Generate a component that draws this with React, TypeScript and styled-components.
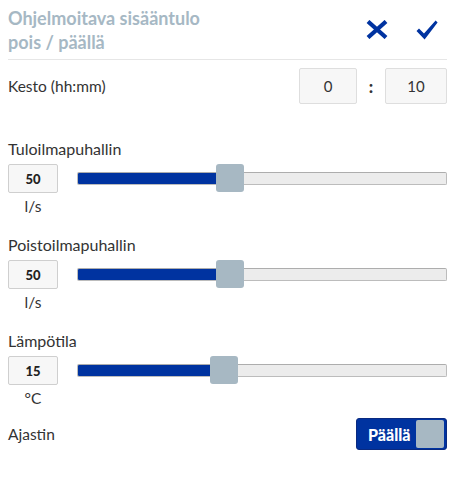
import React from "react";
import styled, { createGlobalStyle } from "styled-components";

const GlobalStyle = createGlobalStyle`
  body {
    margin: 0;
    background: #fff;
    font-family: Lato, "Liberation Sans", sans-serif;
    color: #333;
  }
`;

const Panel = styled.div`
  width: 439px;
  margin-left: 8px;
  display: flex;
  flex-direction: column;
`;

const Header = styled.div`
  display: flex;
  justify-content: space-between;
  align-items: flex-start;
  height: 60px;
  padding-top: 6px;
  box-sizing: border-box;
  border-bottom: 1px solid #e6e6e6;
`;

const Title = styled.h1`
  margin: 0;
  font-size: 18px;
  font-weight: 700;
  line-height: 24px;
  color: #a6b8c4;
`;

const Actions = styled.div`
  display: flex;
  gap: 28px;
  padding-top: 14px;
  padding-right: 9px;
`;

const IconButton = styled.button`
  border: 0;
  background: none;
  padding: 0;
  cursor: pointer;
  display: flex;
`;

const DurationRow = styled.div`
  display: flex;
  align-items: center;
  justify-content: space-between;
  margin-top: 8px;
`;

const Label = styled.div`
  font-size: 15.5px;
  line-height: 20px;
`;

const TimeInputs = styled.div`
  display: flex;
  align-items: center;
`;

const TimeBox = styled.div<{ $wide?: boolean }>`
  width: ${(p) => (p.$wide ? "62px" : "58px")};
  height: 36px;
  box-sizing: border-box;
  border: 1px solid #dedede;
  border-radius: 2px;
  background: #f7f7f7;
  display: flex;
  align-items: center;
  justify-content: center;
  font-size: 15px;
`;

const Colon = styled.span`
  width: 28px;
  text-align: center;
  font-weight: 900;
  font-size: 17px;
`;

const Section = styled.div<{ $first?: boolean }>`
  display: flex;
  flex-direction: column;
  margin-top: ${(p) => (p.$first ? "35px" : "19px")};
`;

const SectionLabel = styled(Label)`
  font-size: 16px;
`;

const ControlRow = styled.div`
  display: flex;
  align-items: center;
  gap: 19px;
  margin-top: 5px;
`;

const ValueBox = styled.div`
  width: 50px;
  height: 29px;
  box-sizing: border-box;
  border: 1px solid #cfcfcf;
  border-radius: 2px;
  background: #f7f7f7;
  display: flex;
  align-items: center;
  justify-content: center;
  font-size: 13px;
  font-weight: 900;
  color: #222;
  flex-shrink: 0;
`;

const Unit = styled.div`
  width: 50px;
  text-align: center;
  font-size: 15.5px;
  line-height: 20px;
  margin-top: 3px;
`;

const Slider = styled.div`
  position: relative;
  flex: 1;
  height: 28px;
  display: flex;
  align-items: center;
`;

const Track = styled.div`
  width: 100%;
  height: 13px;
  box-sizing: border-box;
  border: 1px solid #bcbcbc;
  border-top-color: #adadad;
  border-radius: 2px;
  background: #ececec;
  position: relative;
  overflow: hidden;
`;

const Fill = styled.div`
  position: absolute;
  left: -1px;
  top: -1px;
  bottom: -1px;
  background: #0033a0;
  border-radius: 3px 0 0 3px;
`;

const Thumb = styled.div`
  position: absolute;
  top: -1px;
  width: 28px;
  height: 28px;
  border-radius: 3px;
  background: #a7b8c3;
`;

const TimerRow = styled.div`
  display: flex;
  align-items: center;
  justify-content: space-between;
  margin-top: 10px;
`;

const Toggle = styled.button`
  width: 91px;
  height: 32px;
  box-sizing: border-box;
  border: 1px solid #0a2a80;
  border-radius: 3px;
  background: #0033a0;
  display: flex;
  align-items: center;
  justify-content: space-between;
  padding: 0 2px 0 11px;
  cursor: pointer;
  font-family: inherit;
  font-size: 16px;
  font-weight: 900;
  color: #fff;
`;

const Knob = styled.span`
  width: 28px;
  height: 28px;
  border-radius: 2px;
  background: #a7b8c3;
`;

const SLIDER_WIDTH = 370;
const THUMB = 28;

const controls = [
  { label: "Tuloilmapuhallin", value: "50", unit: "l/s", pos: 0.406 },
  { label: "Poistoilmapuhallin", value: "50", unit: "l/s", pos: 0.406 },
  { label: "Lämpötila", value: "15", unit: "°C", pos: 0.389 },
];

function CloseIcon() {
  return (
    <svg width="22" height="19" viewBox="0 0 22 19">
      <path d="M2 1.5 L20 17.5 M20 1.5 L2 17.5" stroke="#0033a0" strokeWidth="4.2" />
    </svg>
  );
}

function CheckIcon() {
  return (
    <svg width="22" height="20" viewBox="0 0 22 20">
      <path d="M0.5 11 L3 8.6 L8 13.6 L19.6 0.6 L21.6 2.4 L8.6 19.4 Z" fill="#0033a0" />
    </svg>
  );
}

function RangeControl({ pos }: { pos: number }) {
  const left = Math.round(pos * (SLIDER_WIDTH - THUMB));
  return (
    <Slider>
      <Track>
        <Fill style={{ width: left + THUMB / 2 }} />
      </Track>
      <Thumb style={{ left }} />
    </Slider>
  );
}

export default function App() {
  return (
    <>
      <GlobalStyle />
      <Panel>
        <Header>
          <Title>
            Ohjelmoitava sisääntulo
            <br />
            pois / päällä
          </Title>
          <Actions>
            <IconButton aria-label="Peruuta">
              <CloseIcon />
            </IconButton>
            <IconButton aria-label="Tallenna">
              <CheckIcon />
            </IconButton>
          </Actions>
        </Header>

        <DurationRow>
          <Label>Kesto (hh:mm)</Label>
          <TimeInputs>
            <TimeBox>0</TimeBox>
            <Colon>:</Colon>
            <TimeBox $wide>10</TimeBox>
          </TimeInputs>
        </DurationRow>

        {controls.map((c, i) => (
          <Section key={c.label} $first={i === 0}>
            <SectionLabel>{c.label}</SectionLabel>
            <ControlRow>
              <ValueBox>{c.value}</ValueBox>
              <RangeControl pos={c.pos} />
            </ControlRow>
            <Unit>{c.unit}</Unit>
          </Section>
        ))}

        <TimerRow>
          <Label>Ajastin</Label>
          <Toggle>
            Päällä
            <Knob />
          </Toggle>
        </TimerRow>
      </Panel>
    </>
  );
}
